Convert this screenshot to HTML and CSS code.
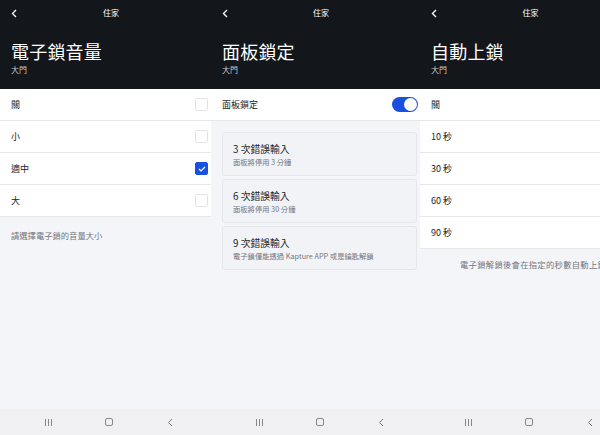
FILE: index.html
```html
<!DOCTYPE html>
<html lang="zh-Hant">
<head>
  <meta charset="UTF-8" />
  <meta name="viewport" content="width=device-width, initial-scale=1.0"/>
  <title>電子鎖設定</title>
  <link rel="stylesheet" href="styles.css">
</head>
<body>
  <div class="screens">

    <!-- 音量 -->
    <section class="screen">
      <header class="head">
        <div class="topbar">
          <span class="back"><svg width="6" height="9" viewBox="0 0 6 9"><path d="M5 1 L1.5 4.5 L5 8" fill="none" stroke="#fff" stroke-width="1.4"/></svg></span>
          <span class="home">住家</span>
          <span></span>
        </div>
        <h1>電子鎖音量</h1>
        <div class="sub">大門</div>
      </header>
      <div class="body">
        <div class="list">
          <div class="row"><span>關</span><span class="check"></span></div>
          <div class="row"><span>小</span><span class="check"></span></div>
          <div class="row"><span>適中</span><span class="check on"><svg width="8" height="6" viewBox="0 0 8 6"><path d="M1 3 L3 5 L7 1" fill="none" stroke="#fff" stroke-width="1.2"/></svg></span></div>
          <div class="row"><span>大</span><span class="check"></span></div>
        </div>
        <p class="note">請選擇電子鎖的音量大小</p>
      </div>
      <nav class="navbar">
        <span class="nav-ico"><i class="bars"></i></span>
        <span class="nav-ico"><i class="square"></i></span>
        <span class="nav-ico"><svg width="6" height="9" viewBox="0 0 6 9"><path d="M5 1 L1.5 4.5 L5 8" fill="none" stroke="#777" stroke-width="1"/></svg></span>
      </nav>
    </section>

    <!-- 面板鎖定 -->
    <section class="screen">
      <header class="head">
        <div class="topbar">
          <span class="back"><svg width="6" height="9" viewBox="0 0 6 9"><path d="M5 1 L1.5 4.5 L5 8" fill="none" stroke="#fff" stroke-width="1.4"/></svg></span>
          <span class="home">住家</span>
          <span></span>
        </div>
        <h1>面板鎖定</h1>
        <div class="sub">大門</div>
      </header>
      <div class="body">
        <div class="list">
          <div class="row"><span>面板鎖定</span><span class="toggle"><i></i></span></div>
        </div>
        <div class="cards">
          <div class="card">
            <div class="card-title">3 次錯誤輸入</div>
            <div class="card-sub">面板將停用 3 分鐘</div>
          </div>
          <div class="card">
            <div class="card-title">6 次錯誤輸入</div>
            <div class="card-sub">面板將停用 30 分鐘</div>
          </div>
          <div class="card">
            <div class="card-title">9 次錯誤輸入</div>
            <div class="card-sub">電子鎖僅能透過 Kapture APP 或是鑰匙解鎖</div>
          </div>
        </div>
      </div>
      <nav class="navbar">
        <span class="nav-ico"><i class="bars"></i></span>
        <span class="nav-ico"><i class="square"></i></span>
        <span class="nav-ico"><svg width="6" height="9" viewBox="0 0 6 9"><path d="M5 1 L1.5 4.5 L5 8" fill="none" stroke="#777" stroke-width="1"/></svg></span>
      </nav>
    </section>

    <!-- 自動上鎖 -->
    <section class="screen">
      <header class="head">
        <div class="topbar">
          <span class="back"><svg width="6" height="9" viewBox="0 0 6 9"><path d="M5 1 L1.5 4.5 L5 8" fill="none" stroke="#fff" stroke-width="1.4"/></svg></span>
          <span class="home">住家</span>
          <span></span>
        </div>
        <h1>自動上鎖</h1>
        <div class="sub">大門</div>
      </header>
      <div class="body">
        <div class="list">
          <div class="row"><span>關</span><span class="check"></span></div>
          <div class="row"><span>10 秒</span><span class="check"></span></div>
          <div class="row"><span>30 秒</span><span class="check"></span></div>
          <div class="row"><span>60 秒</span><span class="check"></span></div>
          <div class="row"><span>90 秒</span><span class="check"></span></div>
        </div>
        <p class="note center">電子鎖解鎖後會在指定的秒數自動上鎖</p>
      </div>
      <nav class="navbar">
        <span class="nav-ico"><i class="bars"></i></span>
        <span class="nav-ico"><i class="square"></i></span>
        <span class="nav-ico"><svg width="6" height="9" viewBox="0 0 6 9"><path d="M5 1 L1.5 4.5 L5 8" fill="none" stroke="#777" stroke-width="1"/></svg></span>
      </nav>
    </section>

  </div>
</body>
</html>
```

FILE: styles.css
```css
:root {
  --dark: #13161b;
  --page: #f4f5f9;
  --line: #e6e7eb;
  --text: #222428;
  --muted: #74767c;
  --blue: #1a50e0;
}

body {
  margin: 0;
  width: 600px;
  height: 435px;
  overflow: hidden;
  font-family: 'Noto Sans CJK TC', 'Noto Sans', sans-serif;
  background: var(--page);
  color: var(--text);
}

.screens {
  display: grid;
  grid-template-columns: 211px 209px 210px;
  width: 630px;
  height: 435px;
}

.screen {
  display: flex;
  flex-direction: column;
  height: 435px;
  background: var(--page);
  overflow: hidden;
}

.head {
  background: var(--dark);
  color: #fff;
  height: 89px;
  padding-left: 11px;
  box-sizing: border-box;
}

.topbar {
  display: grid;
  grid-template-columns: 1fr auto 1fr;
  align-items: center;
  height: 26px;
}

.back {
  display: flex;
  align-items: center;
}

.home {
  font-size: 8px;
  line-height: 10px;
}

h1 {
  margin: 13px 0 0;
  font-size: 18px;
  font-weight: 400;
  line-height: 24px;
  letter-spacing: 0.2px;
}

.sub {
  margin-top: 1px;
  font-size: 8px;
  line-height: 12px;
  color: #c9cacd;
}

.body {
  flex: 1;
}

.list {
  background: #fff;
}

.row {
  display: flex;
  align-items: center;
  justify-content: space-between;
  height: 31px;
  padding: 0 3px 0 11px;
  border-bottom: 1px solid var(--line);
  font-size: 9px;
}

.check {
  width: 11px;
  height: 11px;
  border: 1px solid #e2e3e6;
  border-radius: 2px;
  display: flex;
  align-items: center;
  justify-content: center;
}

.check.on {
  background: var(--blue);
  border-color: var(--blue);
}

.toggle {
  width: 26px;
  height: 15px;
  border-radius: 8px;
  background: var(--blue);
  position: relative;
  margin-right: -1px;
}

.toggle i {
  position: absolute;
  right: 1px;
  top: 1px;
  width: 13px;
  height: 13px;
  border-radius: 50%;
  background: #fff;
}

.note {
  margin: 0;
  padding: 12px 11px 0;
  font-size: 8.3px;
  line-height: 12px;
  color: var(--muted);
}

.note.center {
  padding: 9px 0 0 40px;
  letter-spacing: 0.3px;
}

.cards {
  display: flex;
  flex-direction: column;
  gap: 3px;
  padding: 11px 3px 0 11px;
}

.card {
  height: 44px;
  box-sizing: border-box;
  padding: 10px 0 0 10px;
  border: 1px solid var(--line);
  border-radius: 3px;
  background: #f2f3f7;
}

.card-title {
  font-size: 9.8px;
  line-height: 13px;
}

.card-sub {
  font-size: 7.3px;
  line-height: 10px;
  margin-top: 1px;
  color: var(--muted);
}

.navbar {
  display: flex;
  align-items: center;
  gap: 41px;
  height: 26px;
  padding-left: 38px;
  background: #f0f0f2;
}

.nav-ico {
  width: 20px;
  display: flex;
  justify-content: center;
}

.bars {
  width: 7px;
  height: 7px;
  background: linear-gradient(90deg, #888 1px, transparent 1px, transparent 3px, #888 3px, #888 4px, transparent 4px, transparent 6px, #888 6px);
}

.square {
  width: 6px;
  height: 6px;
  border: 1px solid #888;
  border-radius: 2px;
}
```
